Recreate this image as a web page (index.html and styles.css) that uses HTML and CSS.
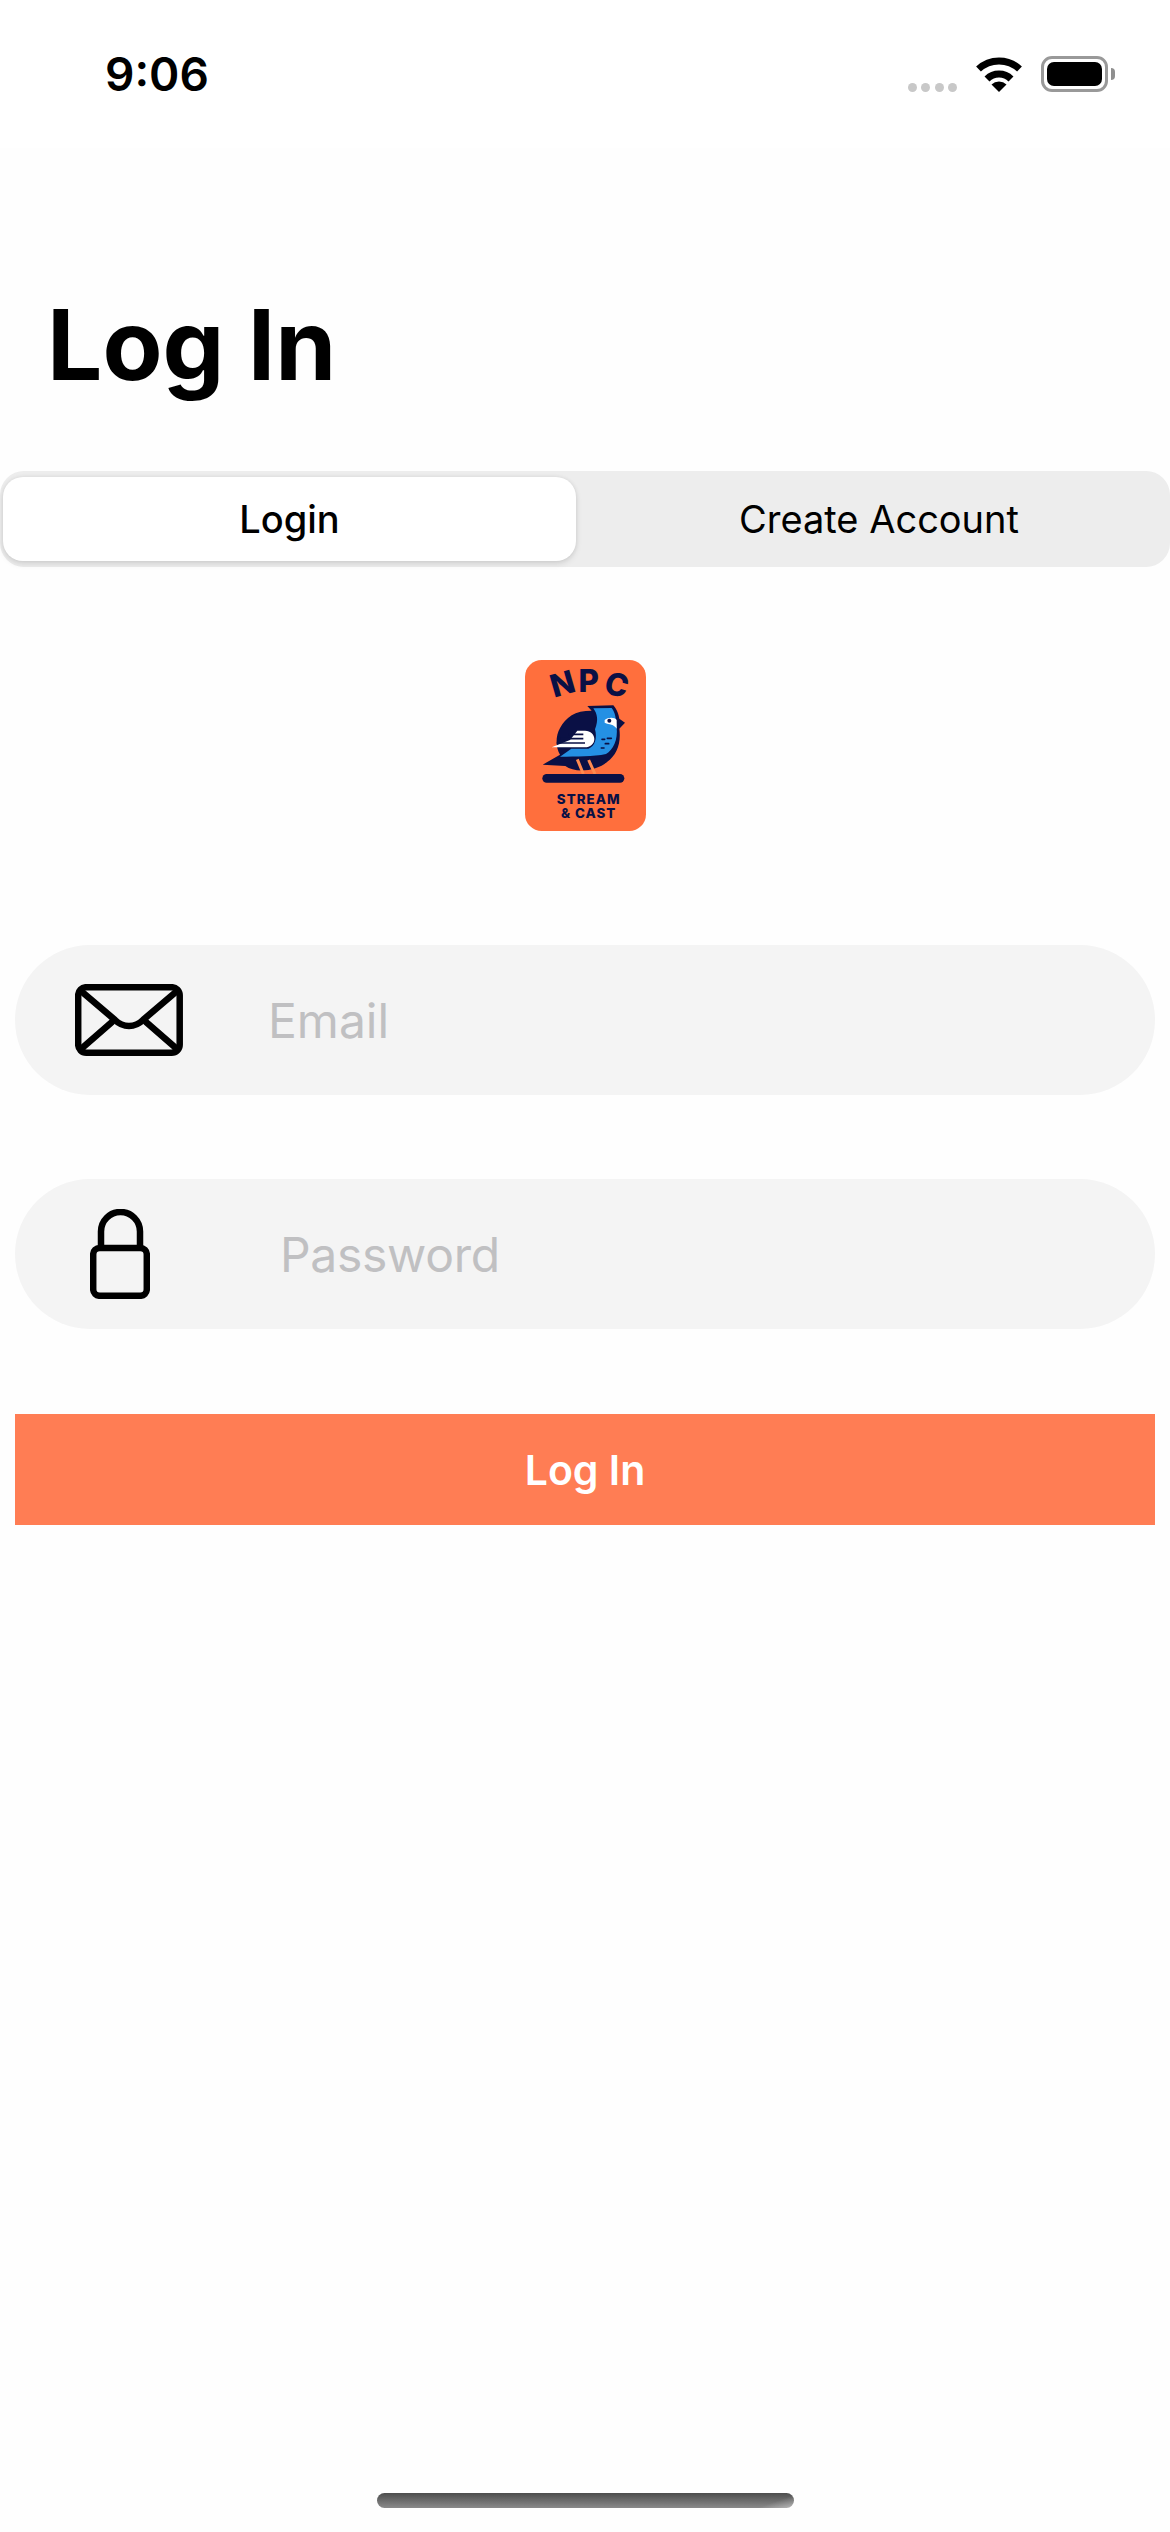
FILE: index.html
```html
<!DOCTYPE html>
<html lang="en">
<head>
    <meta charset="UTF-8">
    <meta name="viewport" content="width=device-width, initial-scale=1.0">
    <title>Log In</title>
    <link rel="stylesheet" href="styles.css">
</head>
<body>
    <div class="page">
        <!-- Status bar -->
        <div class="status-bar">
            <span class="status-time">9:06</span>
            <div class="status-icons">
                <div class="signal-dots"><i></i><i></i><i></i><i></i></div>
                <svg class="wifi-icon" width="48" height="36" viewBox="0 0 48 36">
                    <path d="M3.5 13 A30 30 0 0 1 44.5 13" fill="none" stroke="#000" stroke-width="7"/>
                    <path d="M12 23 A17 17 0 0 1 36 23" fill="none" stroke="#000" stroke-width="7"/>
                    <path d="M24 36 L16.500 28.500 A11 11 0 0 1 31.500 28.500 Z" fill="#000"/>
                </svg>
                <div class="battery"><div class="battery-fill"></div></div>
                <div class="battery-nub"></div>
            </div>
        </div>

        <h1 class="page-title">Log In</h1>

        <div class="tabs">
            <div class="tab tab-active">Login</div>
            <div class="tab">Create Account</div>
        </div>

        <!-- Logo -->
        <div class="logo-wrap">
            <svg class="logo" width="121" height="171" viewBox="75 60 363 513">
                <rect x="75" y="60" width="363" height="513" rx="50" fill="#ff6f3d"/>
                <g class="logo-arch">
                    <text x="187" y="165" transform="rotate(-16 187 130)">N</text>
                    <text x="266" y="155">P</text>
                    <text x="350" y="168" transform="rotate(16 350 135)">C</text>
                </g>
                <!-- bird -->
                <path d="M262 198 L340 196 C352 210 356 225 358 236 L375 248 L358 266 C364 310 350 345 322 365 C290 394 225 400 196 378 L128 374 L180 344 C160 310 168 258 215 226 C230 216 250 212 275 212 Z" fill="#0a1045"/>
                <path d="M280 205 L335 204 C346 218 348 235 350 262 C354 300 340 330 318 342 C280 350 230 350 180 350 L214 326 H265 C285 320 292 295 285 268 C296 240 292 222 280 205 Z" fill="#2490e4"/>
                <path d="M314 240 C325 231 345 232 350 240 L350 266 C342 252 328 254 314 248 Z" fill="#fff"/>
                <circle cx="328" cy="242" r="6" fill="#0a1045"/>
                <path d="M232 272 H255 C272 272 283 284 283 297 C283 312 270 322 255 322 H172 L155 322 L210 300 Z" fill="#fff"/>
                <path d="M205 283 H250 M182 296 H250 M170 309 H255" stroke="#0a1045" stroke-width="5" fill="none"/>
                <path d="M306 298 h8 M322 295 h12 M316 311 h10 M304 324 h8" stroke="#0a1045" stroke-width="5" stroke-linecap="round" fill="none"/>
                <path d="M232 358 L250 402 M266 360 L285 402" stroke="#ff8a4f" stroke-width="9" fill="none"/>
                <rect x="127" y="402" width="246" height="26" rx="13" fill="#0a1045"/>
                <g class="logo-caption">
                    <text x="266" y="491">STREAM</text>
                    <text x="266" y="535">&amp; CAST</text>
                </g>
            </svg>
        </div>

        <!-- Form -->
        <div class="field">
            <svg class="field-icon" width="108" height="72" viewBox="0 0 108 72" fill="none" stroke="#000" stroke-width="6.500" stroke-linecap="round">
                <rect x="3.200" y="3.200" width="101.500" height="65.500" rx="8"/>
                <path d="M6 7 L40 36 C48 44 60 44 68 36 L102 7"/>
                <path d="M37 38 L6 65 M71 38 L102 65"/>
            </svg>
            <span class="placeholder placeholder-email">Email</span>
        </div>

        <div class="field">
            <svg class="field-icon field-icon-lock" width="60" height="90" viewBox="0 0 60 90" fill="none" stroke="#000" stroke-width="6.500">
                <path d="M11 37 V22.500 A19.500 19.500 0 0 1 50 22.500 V37"/>
                <rect x="3.200" y="39" width="53.600" height="47.800" rx="6.500"/>
            </svg>
            <span class="placeholder placeholder-password">Password</span>
        </div>

        <button class="login-button">Log In</button>

        <div class="home-indicator"></div>
    </div>
</body>
</html>
```

FILE: styles.css
```css
body {
    margin: 0;
    background: #fefefe;
    font-family: Inter, "Noto Sans", sans-serif;
    color: #000;
    overflow: hidden;
}

.page {
    display: flex;
    flex-direction: column;
    height: 2532px;
}

/* Status bar */
.status-bar {
    display: flex;
    justify-content: space-between;
    align-items: center;
    height: 148px;
    padding: 0 55px 0 105px;
    background: #fff;
}

.status-time {
    font-size: 46px;
    font-weight: 600;
}

.status-icons {
    display: flex;
    align-items: center;
}

.signal-dots {
    display: flex;
    gap: 4.500px;
    margin: 26px 18px 0 0;
}

.signal-dots i {
    width: 9px;
    height: 9px;
    border-radius: 50%;
    background: #c8c8c8;
}

.wifi-icon {
    margin-right: 18px;
}

.battery {
    box-sizing: border-box;
    width: 67px;
    height: 36px;
    padding: 3px;
    border: 3px solid #999;
    border-radius: 11px;
}

.battery-fill {
    height: 100%;
    background: #000;
    border-radius: 7px;
}

.battery-nub {
    width: 4px;
    height: 12px;
    margin-left: 3px;
    background: #8f8f8f;
    border-radius: 0 6px 6px 0;
}

.page-title {
    margin: 137px 0 66px;
    padding-left: 47px;
    font-size: 98px;
    line-height: 120px;
    font-weight: 700;
}

/* Segmented tabs */
.tabs {
    display: flex;
    height: 96px;
    box-sizing: border-box;
    padding: 6px 0;
    background: #ededed;
    border-radius: 24px;
}

.tab {
    flex: 1;
    display: flex;
    align-items: center;
    justify-content: center;
    padding-left: 12px;
    font-size: 38px;
    font-weight: 400;
}

.tab-active {
    flex: none;
    width: 573px;
    margin-left: 3px;
    padding-left: 0;
    background: #fff;
    border-radius: 20px;
    font-weight: 500;
    box-shadow: 0 3px 6px rgba(0, 0, 0, 0.1), 0 0 4px rgba(0, 0, 0, 0.08);
}

.logo-wrap {
    display: flex;
    justify-content: center;
    margin: 93px 0 114px;
}

.logo-arch text {
    font-family: Inter, sans-serif;
    font-size: 94px;
    font-weight: 800;
    fill: #0a1045;
    text-anchor: middle;
}

.logo-caption text {
    font-family: Inter, sans-serif;
    font-size: 40px;
    font-weight: 800;
    letter-spacing: 3px;
    fill: #0a1045;
    text-anchor: middle;
}

/* Form */
.field {
    display: flex;
    align-items: center;
    height: 150px;
    margin: 0 15px 84px;
    padding-left: 60px;
    background: #f4f4f4;
    border-radius: 75px;
}

.field-icon-lock {
    margin-left: 15px;
}

.placeholder {
    font-size: 48px;
    color: #c0c0c2;
}

.placeholder-email {
    margin-left: 85px;
}

.placeholder-password {
    margin-left: 130px;
    letter-spacing: -0.3px;
}

.login-button {
    height: 111px;
    margin: 1px 15px 0;
    border: none;
    background: #ff7d54;
    color: #fff;
    font-family: Inter, "Noto Sans", sans-serif;
    font-size: 41px;
    font-weight: 600;
}

.home-indicator {
    width: 417px;
    height: 15px;
    margin: auto auto 24px;
    border-radius: 8px;
    background: linear-gradient(160deg, transparent 92%, rgba(255, 255, 255, 0.4)), linear-gradient(#4d4d4d, #8a8a8a);
}
```
